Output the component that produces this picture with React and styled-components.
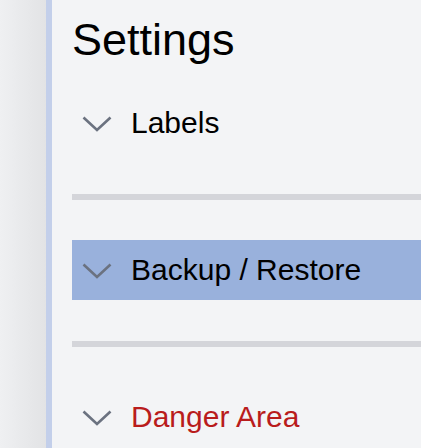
import React from "react";
import styled, { createGlobalStyle } from "styled-components";

const Global = createGlobalStyle`
  html, body {
    margin: 0;
    padding: 0;
    background: #f3f4f6;
    font-family: "Liberation Sans", Arial, sans-serif;
  }
`;

const Page = styled.div`
  display: flex;
  height: 448px;
  overflow: hidden;
`;

const Sidebar = styled.div`
  width: 46px;
  flex-shrink: 0;
  background: linear-gradient(to right, #eff0f2, #e2e3e5);
`;

const Rail = styled.div`
  width: 6px;
  flex-shrink: 0;
  background: #c3cfea;
`;

const Main = styled.div`
  flex: 1;
  padding-left: 20px;
  display: flex;
  flex-direction: column;
`;

const Title = styled.h1`
  margin: 0;
  height: 93px;
  padding-top: 14px;
  box-sizing: border-box;
  font-size: 45px;
  font-weight: 400;
  line-height: 52px;
  color: #000;
`;

const Row = styled.div`
  height: 60px;
  display: flex;
  align-items: center;
  background: ${(p) => (p.$active ? "#99b1dc" : "transparent")};
  color: ${(p) => (p.$danger ? "#b91c1c" : "#000")};
  font-size: 30px;
`;

const Chevron = styled.svg`
  width: 30px;
  height: 16px;
  margin-left: 10px;
  margin-right: 19px;
  margin-top: 2px;
`;

const Divider = styled.div`
  height: 6px;
  background: #d4d5da;
  margin: 41px 0 40px;
`;

const Arrow = () => (
  <Chevron viewBox="0 0 30 16">
    <path d="M1.5 1.5 L15 14 L28.5 1.5" fill="none" stroke="#6b7280" strokeWidth="2.6" />
  </Chevron>
);

export default function App() {
  return (
    <Page>
      <Global />
      <Sidebar />
      <Rail />
      <Main>
        <Title>Settings</Title>
        <Row>
          <Arrow />
          Labels
        </Row>
        <Divider />
        <Row $active>
          <Arrow />
          Backup / Restore
        </Row>
        <Divider />
        <Row $danger>
          <Arrow />
          Danger Area
        </Row>
      </Main>
    </Page>
  );
}
